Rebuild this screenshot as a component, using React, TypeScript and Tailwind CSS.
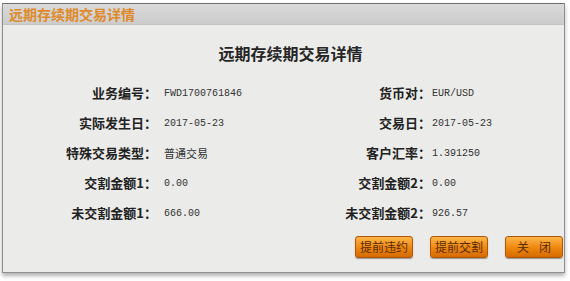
import React from 'react';

const rows = [
  { l: '业务编号：', lv: 'FWD1700761846', r: '货币对：', rv: 'EUR/USD' },
  { l: '实际发生日：', lv: '2017-05-23', r: '交易日：', rv: '2017-05-23' },
  { l: '特殊交易类型：', lv: '普通交易', r: '客户汇率：', rv: '1.391250', cjk: true },
  { l: '交割金额1：', lv: '0.00', r: '交割金额2：', rv: '0.00' },
  { l: '未交割金额1：', lv: '666.00', r: '未交割金额2：', rv: '926.57' },
];

const cjk = { fontFamily: '"Noto Sans CJK SC", "Noto Sans", sans-serif' };
const mono = { fontFamily: '"Liberation Mono", "DejaVu Sans Mono", "Noto Sans CJK SC", monospace' };

function OrangeButton({ label, wide }: { label: string; wide?: boolean }) {
  return (
    <button
      className={`h-[22px] w-[58px] rounded-[3px] border border-[#b0560a] bg-gradient-to-b from-[#fbb545] via-[#f08a10] to-[#d66a00] text-[12px] leading-none text-[#5a2c00] shadow-[0_1px_1px_rgba(0,0,0,0.35)] ${wide ? 'tracking-[10px] pl-[10px]' : ''}`}
      style={cjk}
    >
      {label}
    </button>
  );
}

export default function App() {
  return (
    <div className="w-[570px] h-[281px] bg-white pt-[3px] pl-[2px] overflow-hidden">
      <div className="w-[563px] h-[270px] border border-[#8f8f8f] border-t-[#707070] bg-[#ebebe9] shadow-[0_3px_4px_rgba(0,0,0,0.3)] flex flex-col">
        {/* Title bar */}
        <div className="h-[21px] bg-gradient-to-b from-[#dadada] to-[#cccccc] border-b border-[#c4c4c4] flex items-center pl-[6px]">
          <span className="text-[14px] font-bold leading-none text-[#de8a2a]" style={cjk}>
            远期存续期交易详情
          </span>
        </div>

        {/* Body */}
        <div className="flex-1 flex flex-col">
          <div className="h-[30px] mt-[13px] flex items-center justify-center pl-[14px]">
            <span className="text-[16px] font-bold text-[#262626]" style={cjk}>
              远期存续期交易详情
            </span>
          </div>

          <div className="mt-[10px] flex flex-col">
            {rows.map((row) => (
              <div key={row.l} className="h-[30px] grid grid-cols-[154px_144px_130px_1fr] items-center">
                <span className="text-right text-[13px] font-bold text-[#222]" style={cjk}>
                  {row.l}
                </span>
                <span
                  className={`pl-[7px] text-[#333] ${row.cjk ? 'text-[11px]' : 'text-[10px]'}`}
                  style={row.cjk ? cjk : mono}
                >
                  {row.lv}
                </span>
                <span className="text-right text-[13px] font-bold text-[#222]" style={cjk}>
                  {row.r}
                </span>
                <span className="pl-[1px] text-[10px] text-[#333]" style={mono}>
                  {row.rv}
                </span>
              </div>
            ))}
          </div>

          <div className="mt-[8px] flex justify-end gap-[17px] pr-[1px]">
            <OrangeButton label="提前违约" />
            <OrangeButton label="提前交割" />
            <OrangeButton label="关闭" wide />
          </div>
        </div>
      </div>
    </div>
  );
}
